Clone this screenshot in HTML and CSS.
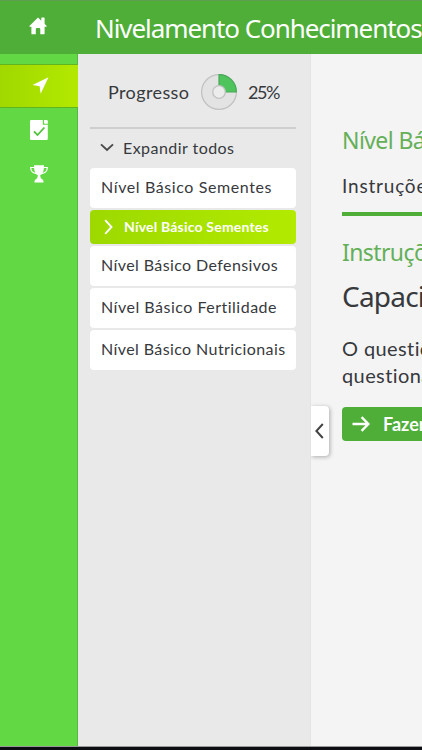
FILE: index.html
```
<!DOCTYPE html>
<html lang="pt-br">
<head>
    <meta charset="utf-8" />
    <title>Nivelamento Conhecimentos</title>
    <link rel="stylesheet" href="styles.css">
</head>
<body>
    <header class="topo">
        <a class="home">
            <svg width="18" height="18" viewBox="0 0 18 18">
                <path fill="#fff" d="M9 0.5 L12.3 3.7 V1 Q12.3 0.4 12.9 0.4 H15 Q15.6 0.4 15.6 1 V6.8 L17.7 8.9 Q18 9.7 17.1 9.7 H15.6 V16.4 Q15.6 17.3 14.7 17.3 H11.3 V12.2 Q11.3 11 10.1 11 H8 Q6.8 11 6.8 12.2 V17.3 H3.3 Q2.4 17.3 2.4 16.4 V9.7 H0.8 Q0 9.6 0.4 8.9 Z" />
            </svg>
        </a>
        <h1>Nivelamento Conhecimentos</h1>
    </header>
    <div class="corpo">
        <nav class="barra">
            <a class="icone ativo">
                <svg width="17" height="17" viewBox="0 0 17 17">
                    <path fill="#fff" d="M16.5 0.3 L8.7 16.7 L7.6 9.2 L0.5 8 Z" />
                </svg>
            </a>
            <a class="icone">
                <svg width="18" height="20" viewBox="0 0 18 20">
                    <path fill="#fff" d="M1.2 0 H12.8 V4.8 H17.8 V18.8 Q17.8 20 16.6 20 H1.2 Q0 20 0 18.8 V1.2 Q0 0 1.2 0 Z" />
                    <path fill="#fff" d="M14 0 H16.6 Q17.8 0 17.8 1.2 V3.7 H15 Q14 3.7 14 2.7 Z" />
                    <path fill="none" stroke="#4fc43a" stroke-width="1.8" d="M4 11.3 L7.5 15 L14.4 7.5" />
                </svg>
            </a>
            <a class="icone">
                <svg width="18" height="18" viewBox="0 0 18 18">
                    <path fill="none" stroke="#fff" stroke-width="1.2" d="M4.5 2.5 H0.7 Q0.5 8.3 7 8.6 M13.5 2.5 H17.3 Q17.5 8.3 11 8.6" />
                    <path fill="#fff" d="M4 0.3 H14 Q14.2 8.5 10.2 10.3 Q10.2 12.5 11.2 14 H6.8 Q7.8 12.5 7.8 10.3 Q3.8 8.5 4 0.3 Z M6 13.8 H12 L13.5 16 V17.5 H4.5 V16 Z" />
                </svg>
            </a>
        </nav>
        <aside class="painel">
            <div class="progresso">
                <span class="rotulo">Progresso</span>
                <svg width="38" height="38" viewBox="0 0 38 38">
                    <circle cx="19" cy="19" r="17.4" fill="#e3e3e3" stroke="#c2c2c2" stroke-width="1.3" />
                    <path fill="#4fc35c" stroke="#48a957" stroke-width="1.2" d="M19 1.6 A17.4 17.4 0 0 1 36.4 19 H19 Z" />
                    <circle cx="19" cy="19" r="6.3" fill="#ececec" stroke="#c2c2c2" stroke-width="1.3" />
                </svg>
                <span class="porcento">25%</span>
            </div>
            <div class="expandir">
                <svg width="14" height="9" viewBox="0 0 14 9">
                    <path fill="none" stroke="#4a4a4a" stroke-width="1.9" d="M1 1.4 L7 7 L13 1.4" />
                </svg>
                <span class="expandir-texto">Expandir todos</span>
            </div>
            <ul class="lista">
                <li class="sementes">Nível Básico Sementes</li>
                <li class="selecionado">
                    <svg width="9" height="16" viewBox="0 0 9 16">
                        <path fill="none" stroke="#fff" stroke-width="1.9" d="M1.2 1.2 L7.5 8 L1.2 14.8" />
                    </svg>
                    <span>Nível Básico Sementes</span>
                </li>
                <li class="defensivos">Nível Básico Defensivos</li>
                <li class="fertilidade">Nível Básico Fertilidade</li>
                <li class="nutricionais">Nível Básico Nutricionais</li>
            </ul>
        </aside>
        <main class="conteudo">
            <h2>Nível Básico</h2>
            <p class="aba">Instruções</p>
            <h2 class="instrucoes">Instruções</h2>
            <h3>Capacitação</h3>
            <p class="texto">O questionário<br>questionário</p>
            <a class="botao">
                <svg width="18" height="16" viewBox="0 0 18 16">
                    <path fill="none" stroke="#fff" stroke-width="2.4" d="M0.5 8 H16 M9.6 1.2 L16.4 8 L9.6 14.8" />
                </svg>
                <span>Fazer</span>
            </a>
            <button class="recolher" type="button">
                <svg width="9" height="16" viewBox="0 0 9 16">
                    <path fill="none" stroke="#444" stroke-width="2" d="M7.8 1 L1.4 8 L7.8 15" />
                </svg>
            </button>
        </main>
    </div>
</body>
</html>
```

FILE: styles.css
```
* {
    box-sizing: border-box;
}
body {
    margin: 0;
    height: 750px;
    display: flex;
    flex-direction: column;
    overflow: hidden;
    background-color: #0b0d12;
    color: #37393d;
    font-family: Lato, "Liberation Sans", sans-serif;
}
h1, h2, h3, p, ul {
    margin: 0;
    padding: 0;
    font-weight: normal;
}
svg {
    display: block;
    flex: none;
}
.topo {
    flex: none;
    height: 54px;
    display: flex;
    background-color: #4eae38;
    border-top: 1px solid #5e9e4f;
}
.home {
    width: 78px;
    flex: none;
    padding: 16px 0 0 29px;
}
.topo h1 {
    padding-left: 17px;
    color: #fff;
    font-family: "Noto Sans", sans-serif;
    font-size: 26px;
    line-height: 54px;
    letter-spacing: -1.07px;
    white-space: nowrap;
}
.corpo {
    flex: none;
    height: 693px;
    display: flex;
    border-bottom: 1px solid #999;
}
.barra {
    width: 78px;
    flex: none;
    padding-top: 10px;
    background-color: #63d845;
    border-right: 1px solid #55b93d;
}
.icone {
    height: 44px;
    display: flex;
    align-items: center;
    justify-content: center;
    padding-left: 1px;
}
.ativo {
    background: linear-gradient(to right, #a0d800, #b3e900);
    border-top: 1px solid #61b51f;
    border-bottom: 1px solid #61b51f;
    margin-right: -1px;
    padding: 0 0 2px 2px;
}
.painel {
    width: 233px;
    flex: none;
    padding: 19px 14px 0 12px;
    background-color: #e9e9e9;
    border-right: 1px solid #e3e3e3;
}
.progresso {
    height: 56px;
    display: flex;
    align-items: flex-start;
    padding-left: 18px;
    border-bottom: 2px solid #cfcfcf;
    font-size: 18px;
    line-height: 38px;
}
.rotulo {
    width: 92px;
    letter-spacing: 0.4px;
}
.porcento {
    padding-left: 10px;
    letter-spacing: -1.4px;
}
.expandir {
    height: 39px;
    display: flex;
    align-items: center;
    gap: 9px;
    padding: 0 0 3px 10px;
    font-size: 16px;
}
.expandir-texto {
    letter-spacing: 0.45px;
}
.lista {
    display: grid;
    gap: 2.4px;
    list-style: none;
}
.lista li {
    height: 39.5px;
    padding-left: 11px;
    background-color: #fff;
    border-radius: 4px;
    font-size: 16px;
    line-height: 38px;
    letter-spacing: 0.4px;
    white-space: nowrap;
}
.lista .sementes {
    letter-spacing: 0.6px;
}
.lista .fertilidade {
    letter-spacing: 0.5px;
}
.lista .selecionado {
    height: 34px;
    display: flex;
    align-items: center;
    gap: 11px;
    padding-left: 14px;
    background: linear-gradient(to right, #9dd900, #b2ea00);
    color: #fff;
    font-size: 14px;
    font-weight: bold;
    line-height: 33px;
    letter-spacing: 0.2px;
}
.conteudo {
    position: relative;
    width: 111px;
    flex: none;
    padding: 68px 0 0 31px;
    background-color: #f4f4f4;
    overflow: hidden;
    white-space: nowrap;
}
.conteudo h2 {
    height: 36px;
    color: #64b058;
    font-family: "Noto Sans", sans-serif;
    font-size: 23px;
    line-height: 36px;
    letter-spacing: -0.6px;
}
.aba {
    height: 58px;
    border-bottom: 4px solid #4eae38;
    font-size: 19px;
    line-height: 56px;
    letter-spacing: 0.8px;
}
.conteudo .instrucoes {
    margin-top: 18px;
}
.conteudo h3 {
    height: 52px;
    font-family: "Noto Sans", sans-serif;
    font-size: 28px;
    line-height: 52px;
    letter-spacing: -0.8px;
}
.texto {
    padding-top: 13px;
    font-size: 20px;
    line-height: 27px;
    letter-spacing: 0.4px;
}
.botao {
    height: 34px;
    display: flex;
    align-items: center;
    gap: 13px;
    margin-top: 18px;
    padding-left: 10px;
    background-color: #4eae38;
    border-radius: 4px 0 0 4px;
    color: #fff;
    font-size: 18px;
    font-weight: bold;
}
/* aba que recolhe o painel, por cima do conteúdo */
.recolher {
    position: absolute;
    left: 0;
    top: 352px;
    width: 18px;
    height: 50px;
    padding: 0 0 0 4px;
    background-color: #fff;
    border: none;
    border-radius: 0 4px 4px 0;
    box-shadow: 1px 1px 4px rgba(0, 0, 0, 0.3);
}
```
